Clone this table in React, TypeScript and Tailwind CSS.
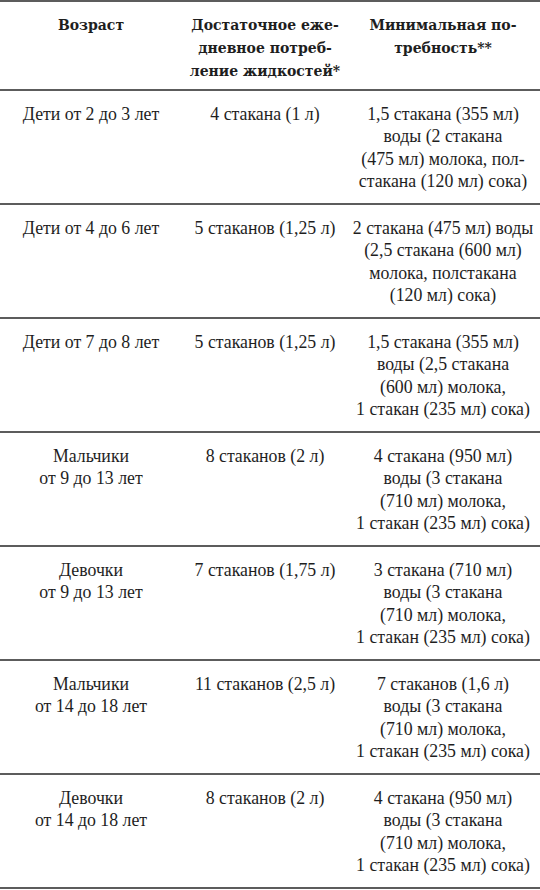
const rows: [string[], string[], string[]][] = [
  [["Дети от 2 до 3 лет"], ["4 стакана (1 л)"], ["1,5 стакана (355 мл)", "воды (2 стакана", "(475 мл) молока, пол-", "стакана (120 мл) сока)"]],
  [["Дети от 4 до 6 лет"], ["5 стаканов (1,25 л)"], ["2 стакана (475 мл) воды", "(2,5 стакана (600 мл)", "молока, полстакана", "(120 мл) сока)"]],
  [["Дети от 7 до 8 лет"], ["5 стаканов (1,25 л)"], ["1,5 стакана (355 мл)", "воды (2,5 стакана", "(600 мл) молока,", "1 стакан (235 мл) сока)"]],
  [["Мальчики", "от 9 до 13 лет"], ["8 стаканов (2 л)"], ["4 стакана (950 мл)", "воды (3 стакана", "(710 мл) молока,", "1 стакан (235 мл) сока)"]],
  [["Девочки", "от 9 до 13 лет"], ["7 стаканов (1,75 л)"], ["3 стакана (710 мл)", "воды (3 стакана", "(710 мл) молока,", "1 стакан (235 мл) сока)"]],
  [["Мальчики", "от 14 до 18 лет"], ["11 стаканов (2,5 л)"], ["7 стаканов (1,6 л)", "воды (3 стакана", "(710 мл) молока,", "1 стакан (235 мл) сока)"]],
  [["Девочки", "от 14 до 18 лет"], ["8 стаканов (2 л)"], ["4 стакана (950 мл)", "воды (3 стакана", "(710 мл) молока,", "1 стакан (235 мл) сока)"]],
]

const Lines = ({ lines }: { lines: string[] }) => (
  <div className="text-center whitespace-nowrap">
    {lines.map((l, i) => (
      <div key={i}>{l}</div>
    ))}
  </div>
)

export default function App() {
  return (
    <div className="w-[540px] h-[890px] bg-white text-[#1e1e1e] font-['Liberation_Serif',serif] overflow-hidden">
      <div className="border-t-2 border-b-2 border-[#5c5c5c] h-[91px] grid grid-cols-[182px_166px_190px] pt-[12px] font-['DejaVu_Serif',serif] font-bold text-[14px] leading-[23px]">
        <Lines lines={["Возраст"]} />
        <Lines lines={["Достаточное еже-", "дневное потреб-", "ление жидкостей*"]} />
        <Lines lines={["Минимальная по-", "требность**"]} />
      </div>
      {rows.map(([a, b, c], i) => (
        <div key={i} className="h-[114px] border-b-2 border-[#5c5c5c] grid grid-cols-[182px_166px_190px] pt-[12px] text-[17.8px] leading-[22.4px]">
          <Lines lines={a} />
          <Lines lines={b} />
          <Lines lines={c} />
        </div>
      ))}
    </div>
  )
}
